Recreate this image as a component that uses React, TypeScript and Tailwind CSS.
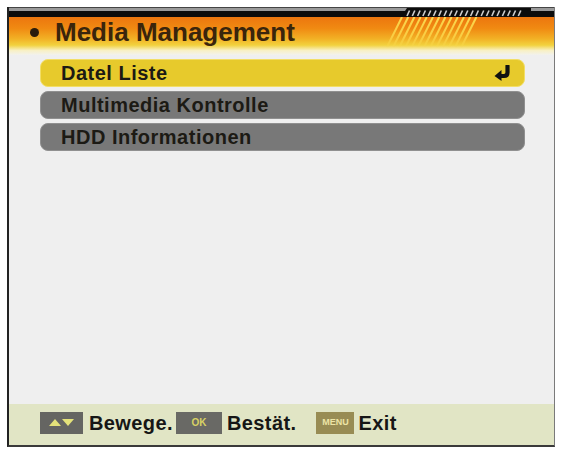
import React from "react";

const font = { fontFamily: '"Liberation Sans", Arial, sans-serif' };

function ReturnIcon() {
  return (
    <svg width="18" height="16" viewBox="0 0 18 16">
      <path d="M13.5 1 L13.5 7.5 Q13.5 11 10 11 L6 11" stroke="#111" strokeWidth="4.2" fill="none" strokeLinecap="round" />
      <path d="M0.5 11 L7.5 5 L7.5 16 Z" fill="#111" />
    </svg>
  );
}

function Stripes() {
  const lines = [];
  for (let i = 0; i < 13; i++) {
    const x = 8 + i * 6.2;
    lines.push(<line key={i} x1={x + 12} y1={0} x2={x - 3} y2={30} stroke="#fbd94e" strokeWidth="2" />);
  }
  return (
    <svg width="100" height="32" viewBox="0 0 100 32" className="absolute left-[373px] top-0">
      <defs>
        <linearGradient id="fade" x1="0" y1="0" x2="0" y2="1">
          <stop offset="0" stopColor="#fff" stopOpacity="1" />
          <stop offset="0.6" stopColor="#fff" stopOpacity="0.8" />
          <stop offset="1" stopColor="#fff" stopOpacity="0.1" />
        </linearGradient>
        <mask id="m">
          <rect width="100" height="32" fill="url(#fade)" />
        </mask>
      </defs>
      <g mask="url(#m)">{lines}</g>
    </svg>
  );
}

function Hatch() {
  const dashes = [];
  for (let i = 0; i < 22; i++) {
    const x = 6 + i * 5.3;
    dashes.push(<line key={i} x1={x + 2.5} y1={2.5} x2={x} y2={8} stroke="#cfcfcf" strokeWidth="1.6" />);
  }
  return (
    <svg width="130" height="9" viewBox="0 0 130 9" className="absolute left-[392px] top-[-3px]">
      <path d="M6 0 L130 0 L130 9 L0 9 Z" fill="#0c0c0c" />
      {dashes}
    </svg>
  );
}

function Row({ label, active }: { label: string; active?: boolean }) {
  return (
    <div
      className={
        active
          ? "flex h-[28px] items-center justify-between rounded-[8px] border border-[#f2de66] bg-[#e7ca2c] pl-[20px] pr-[12px]"
          : "flex h-[28px] items-center justify-between rounded-[8px] border border-[#909090] bg-[#787878] pl-[20px] pr-[12px]"
      }
    >
      <span className="text-[20px] font-bold leading-none tracking-[0.5px] text-[#1c1a14]">{label}</span>
      {active && <ReturnIcon />}
    </div>
  );
}

export default function App() {
  return (
    <div className="h-[451px] w-[562px] bg-white pl-[7px] pt-[7px]" style={font}>
      <div className="flex h-[440px] w-[548px] flex-col border-b-2 border-l-2 border-r border-b-[#3a3a3a] border-l-[#222] border-r-[#7a7a7a]">
        {/* header */}
        <div className="h-[1px] bg-[#444]" />
        <div className="h-[3px] bg-[#9a9a9a]" />
        <div className="relative h-[6px] bg-[#0c0c0c]">
          <Hatch />
        </div>
        <div className="relative flex h-[38px] items-start bg-[linear-gradient(to_bottom,#ec760e_0%,#f08a12_30%,#f2b226_58%,#f2d23e_74%,#f8f0c4_88%,#f2f2ee_100%)] pl-[21px]">
          <Stripes />
          <div className="mt-[11px] h-[9px] w-[9px] rounded-full bg-[#2a1c0c]" />
          <div className="relative ml-[16px] mt-[2px] text-[26px] font-bold leading-[26px] text-[#3a250c]">Media Management</div>
        </div>
        {/* content */}
        <div className="flex flex-1 flex-col gap-[4px] bg-[#efefef] pl-[31px] pr-[29px] pt-[4px]">
          <Row label="Datel Liste" active />
          <Row label="Multimedia Kontrolle" />
          <Row label="HDD Informationen" />
        </div>
        {/* bottom bar */}
        <div className="flex h-[41px] items-center bg-[#e1e5c5] pb-[4px] pl-[31px] text-[20px] font-bold text-[#161616]">
          <div className="flex h-[22px] w-[43px] items-center justify-center gap-[1px] bg-[#656562]">
            <span className="h-0 w-0 border-x-[6px] border-b-[7px] border-x-transparent border-b-[#e4e27a]" />
            <span className="h-0 w-0 border-x-[6px] border-t-[7px] border-x-transparent border-t-[#e4e27a]" />
          </div>
          <span className="ml-[6px] tracking-[0.4px]">Bewege.</span>
          <div className="ml-[3px] flex h-[22px] w-[46px] items-center justify-center bg-[#696965]">
            <span className="text-[10px] font-bold text-[#d8d264]">OK</span>
          </div>
          <span className="ml-[5px] tracking-[0.4px]">Bestät.</span>
          <div className="ml-[20px] flex h-[22px] w-[38px] items-center justify-center bg-[#988c54]">
            <span className="text-[9px] font-bold text-[#ece4a6]">MENU</span>
          </div>
          <span className="ml-[4px] tracking-[0.4px]">Exit</span>
        </div>
      </div>
    </div>
  );
}
